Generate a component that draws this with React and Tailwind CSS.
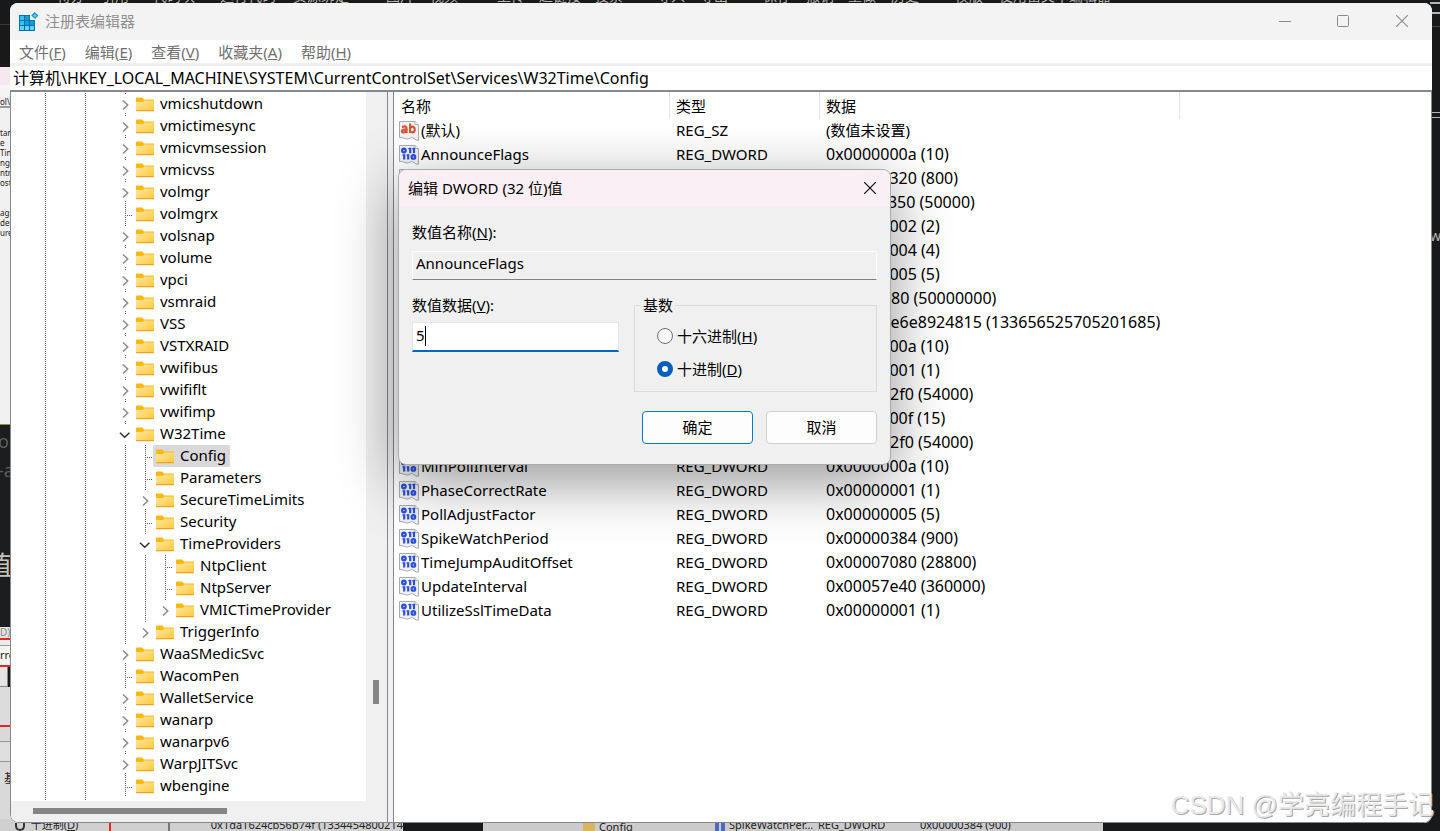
import React from "react";

const TREE = [
  { name: "vmicshutdown", kind: "closed" },
  { name: "vmictimesync", kind: "closed" },
  { name: "vmicvmsession", kind: "closed" },
  { name: "vmicvss", kind: "closed" },
  { name: "volmgr", kind: "closed" },
  { name: "volmgrx", kind: "leaf" },
  { name: "volsnap", kind: "closed" },
  { name: "volume", kind: "closed" },
  { name: "vpci", kind: "closed" },
  { name: "vsmraid", kind: "closed" },
  { name: "VSS", kind: "closed" },
  { name: "VSTXRAID", kind: "closed" },
  { name: "vwifibus", kind: "closed" },
  { name: "vwififlt", kind: "closed" },
  { name: "vwifimp", kind: "closed" },
  { name: "W32Time", kind: "open" },
  { name: "Config", kind: "leaf", depth: 1, selected: true },
  { name: "Parameters", kind: "leaf", depth: 1 },
  { name: "SecureTimeLimits", kind: "closed", depth: 1 },
  { name: "Security", kind: "leaf", depth: 1 },
  { name: "TimeProviders", kind: "open", depth: 1 },
  { name: "NtpClient", kind: "leaf", depth: 2 },
  { name: "NtpServer", kind: "leaf", depth: 2 },
  { name: "VMICTimeProvider", kind: "closed", depth: 2, last: true },
  { name: "TriggerInfo", kind: "closed", depth: 1, last: true },
  { name: "WaaSMedicSvc", kind: "closed" },
  { name: "WacomPen", kind: "leaf" },
  { name: "WalletService", kind: "closed" },
  { name: "wanarp", kind: "closed" },
  { name: "wanarpv6", kind: "closed" },
  { name: "WarpJITSvc", kind: "closed" },
  { name: "wbengine", kind: "leaf" },
];

const VALUES = [
  ["(默认)", "REG_SZ", "(数值未设置)"],
  ["AnnounceFlags", "REG_DWORD", "0x0000000a (10)"],
  ["ClockAdjustmentAuditLimit", "REG_DWORD", "0x00000320 (800)"],
  ["ClockHoldoverPeriod", "REG_DWORD", "0x0000c350 (50000)"],
  ["EventLogFlags", "REG_DWORD", "0x00000002 (2)"],
  ["FrequencyCorrectRate", "REG_DWORD", "0x00000004 (4)"],
  ["HoldPeriod", "REG_DWORD", "0x00000005 (5)"],
  ["LargePhaseOffset", "REG_DWORD", "0x02faf080 (50000000)"],
  ["LastKnownGoodTime", "REG_QWORD", "0x1dad7e6e8924815 (133656525705201685)"],
  ["LocalClockDispersion", "REG_DWORD", "0x0000000a (10)"],
  ["MaxAllowedPhaseOffset", "REG_DWORD", "0x00000001 (1)"],
  ["MaxNegPhaseCorrection", "REG_DWORD", "0x0000d2f0 (54000)"],
  ["MaxPollInterval", "REG_DWORD", "0x0000000f (15)"],
  ["MaxPosPhaseCorrection", "REG_DWORD", "0x0000d2f0 (54000)"],
  ["MinPollInterval", "REG_DWORD", "0x0000000a (10)"],
  ["PhaseCorrectRate", "REG_DWORD", "0x00000001 (1)"],
  ["PollAdjustFactor", "REG_DWORD", "0x00000005 (5)"],
  ["SpikeWatchPeriod", "REG_DWORD", "0x00000384 (900)"],
  ["TimeJumpAuditOffset", "REG_DWORD", "0x00007080 (28800)"],
  ["UpdateInterval", "REG_DWORD", "0x00057e40 (360000)"],
  ["UtilizeSslTimeData", "REG_DWORD", "0x00000001 (1)"],
];

const MENUS = [
  ["文件", "F"],
  ["编辑", "E"],
  ["查看", "V"],
  ["收藏夹", "A"],
  ["帮助", "H"],
];

// Labels of the editor toolbar behind the window, with the width of each slot.
const TOOLBAR = [
  ["待办", 44],
  ["引用", 52],
  ["代码块", 67],
  ["运行代码", 73],
  ["资源绑定", 93],
  ["图片", 44],
  ["视频", 67],
  ["上传", 42],
  ["超链接", 56],
  ["投票", 62],
  ["导入", 43],
  ["导出", 63],
  ["保存", 43],
  ["撤销", 42],
  ["重做", 43],
  ["历史", 64],
  ["模版", 44],
  ["使用富文本编辑器", 130],
];

function Dots({ d }) {
  return <path d={d} stroke="#606060" strokeDasharray="1 1" fill="none" shapeRendering="crispEdges" />;
}

function Guide({ line }) {
  return (
    <svg width="20" height="22" className="shrink-0" aria-hidden="true">
      {line && <Dots d="M10.5 0V22" />}
    </svg>
  );
}

function Branch({ kind, last }) {
  return (
    <svg width="18" height="22" className="shrink-0" aria-hidden="true">
      {kind === "leaf" && (
        <>
          <Dots d="M10.5 0V22" />
          <Dots d="M10 12.5H18" />
        </>
      )}
      {kind !== "leaf" && <Dots d="M10.5 0V2" />}
      {kind === "closed" && !last && <Dots d="M10.5 20V22" />}
      {kind === "closed" && <path d="M8 7.5L12.7 12L8 16.5" stroke="#8a8a8a" strokeWidth="1.5" fill="none" />}
      {kind === "open" && <path d="M5 9.8L9.7 14.3L14.4 9.8" stroke="#303030" strokeWidth="1.5" fill="none" />}
    </svg>
  );
}

function Folder() {
  return (
    <svg width="18" height="15" viewBox="0 0 18 15" className="shrink-0" aria-hidden="true">
      <defs>
        <linearGradient id="folder" x1="0" y1="0" x2="1" y2="1">
          <stop offset="0" stopColor="#ffe7a0" />
          <stop offset="1" stopColor="#ffc83a" />
        </linearGradient>
      </defs>
      <path d="M0 1.2Q0 .5 .7 .5H6.3L8 2.5H17.3Q18 2.5 18 3.2V6H0Z" fill="#fdb813" />
      <path d="M0 5H6.6L8.6 3.6H18V13.3Q18 14 17.3 14H.7Q0 14 0 13.3Z" fill="url(#folder)" />
      <path d="M0 13H18V13.3Q18 14.2 17.3 14.2H.7Q0 14.2 0 13.3Z" fill="#e8a520" />
    </svg>
  );
}

function ValueIcon({ text }) {
  return (
    <svg width="20" height="20" viewBox="0 0 20 20" className="shrink-0" aria-hidden="true">
      <path
        d="M.5 .5H16L19.5 3.6V19.3C17.4 19.5 15.6 18.4 13.8 16.9C12 15.6 10.8 18.2 8 18C5 17.8 3 15.6 .5 16.6Z"
        fill="#f0f2f4"
        stroke="#a9acaf"
      />
      <path d="M16 .5V3.6H19.5" fill="#fff" stroke="#a9acaf" />
      {text ? (
        <g fill="none" stroke="#d9502e" strokeWidth="2.1">
          <path d="M3 6Q7.6 4.2 7.6 7.5V11.9M7.6 8.4Q2.9 8.1 2.9 10.1Q3.1 11.8 5.3 11.4Q7 10.9 7.6 9.5" />
          <path d="M11.1 2.4V11.9M11.1 7.5Q11.8 5.3 14 5.7Q15.8 6.3 15.8 8.5Q15.8 10.9 13.8 11.4Q11.8 11.5 11.1 9.9" />
        </g>
      ) : (
        <g fill="none" stroke="#2c4fdb" strokeWidth="2.2">
          <circle cx="4.9" cy="5.5" r="1.8" />
          <path d="M11.2 2.8V8.2M15 2.8V8.2" />
          <path d="M9.3 3.6H11M13.2 3.6H15" strokeWidth="1.2" />
          <path d="M5.2 9.2V14.6M9.2 9.2V14.6" />
          <path d="M3.3 10H5M7.3 10H9" strokeWidth="1.2" />
          <circle cx="14.4" cy="11.9" r="1.8" />
        </g>
      )}
    </svg>
  );
}

function AppIcon() {
  return (
    <svg width="20" height="20" viewBox="0 0 20 20" aria-hidden="true">
      <path d="M0 3H11V8H16V19H0Z" fill="#0b6fa8" />
      <g fill="#35c1f1">
        <path d="M1 4H5V8H1Z M1 9H5V13H1Z" />
        <path d="M1 14H5V18H1Z M6 14H10V18H6Z M11 14H15V18H11Z" fill="#5fd3fa" />
      </g>
      <path d="M6 4H10V8H6Z M6 9H10V13H6Z M11 9H15V13H11Z" fill="#0e9fdc" />
      <path d="M15.6 0L19.4 3.4L16 7L12.2 3.6Z" fill="#1792c8" />
      <path d="M15.7 1.8L17.8 3.5L15.9 5.4L13.9 3.6Z" fill="#5cc8ee" />
    </svg>
  );
}

function Backdrop() {
  return (
    <div className="absolute inset-0 overflow-hidden bg-[#18191a] select-none" aria-hidden="true">
      <div className="absolute top-0 left-0 h-1 w-full overflow-hidden pl-[57px] text-[14px] leading-5 text-[#b8b4ac]">
        <div className="-mt-3.5 flex whitespace-nowrap">
          {TOOLBAR.map(([label, width]) => (
            <span key={label} className="shrink-0" style={{ width }}>{label}</span>
          ))}
        </div>
      </div>
      <div className="absolute top-0 left-0 flex h-full w-10 flex-col overflow-hidden text-[8px] leading-[10px] text-[#202020]">
        <div className="h-[25px] border-b border-[#3a3a3a]" />
        <div className="h-[42px]" />
        <div className="h-[18px] bg-[#f6e8ee]" />
        <div className="h-[12px] bg-[#f4f4f4]" />
        <div className="h-[11px] border-b-2 border-[#9a9a9a] bg-[#ececec] whitespace-nowrap">ol\W</div>
        <div className="flex h-[316px] flex-col bg-[#f1f1f1] pt-5">
          <span>tanc</span><span>e</span><span>Time</span><span>ngF</span><span>ntri</span><span>ost</span>
          <span className="pt-5">ags</span><span>der</span><span>ure</span>
        </div>
        <div className="h-[203px] border-t border-[#a08a3a] bg-[#1b1d1e] pt-0.5 text-[18px] leading-[29px] text-[#5c5c5c]">
          <div className="-ml-0.5">os</div>
          <div className="-ml-0.5">-a</div>
          <div className="mt-[66px] -ml-3.5 text-[26px] leading-[28px] text-[#c9c4ba]">值</div>
        </div>
        <div className="h-[13px] border-b-2 border-[#e0281e] bg-[#e4e4e4] text-[10px] text-[#888]">D)</div>
        <div className="h-[6px] border-b border-[#999] bg-[#ececec]" />
        <div className="h-[21px] border-b-2 border-[#e0281e] bg-[#f4f4f4] pt-1 text-[11px]">rre</div>
        <div className="h-[20px] w-2 border-r border-b border-[#888] bg-[#e4e4e4]" />
        <div className="h-[40px] border-b-2 border-[#e0281e] bg-[#dcdcdc]" />
        <div className="h-[15px] border-b border-[#999] bg-[#d9d9d9]" />
        <div className="h-[20px] border-b border-[#999] bg-[#dedede]" />
        <div className="flex-1 bg-[#d9d9d9] pt-3 pl-1 text-[12px]">基</div>
      </div>
      <div className="absolute bottom-0 left-0 flex h-3 w-full items-end overflow-hidden text-[11px] leading-[11px] text-[#222]">
        <div className="flex h-3 w-[403px] bg-[#d0d0d0]">
          <span className="mt-1 ml-[15px] h-2 w-2.5 rounded-b-full border-2 border-t-0 border-[#333]" />
          <span className="ml-1.5 w-[83px] whitespace-nowrap">十进制(<u>D</u>)</span>
          <span className="h-3 w-[3px] bg-[#e0281e]" />
          <span className="ml-[57px] w-[45px] border-l-2 border-[#777]" />
          <span className="whitespace-nowrap">0x1da1624cb56b74f (1334454800214</span>
        </div>
        <div className="w-20" />
        <div className="flex h-3 flex-1 items-start gap-1 bg-[#cbcbcb] whitespace-nowrap">
          <span className="ml-[100px] h-3 w-3 bg-[#d8b660]" />
          <span className="w-[112px] pt-0.5">Config</span>
          <span className="h-3 w-2.5 border-x-4 border-[#5068c0]" />
          <span className="w-[85px]">SpikeWatchPer…</span>
          <span className="w-[98px]">REG_DWORD</span>
          <span>0x00000384 (900)</span>
        </div>
        <div className="w-[337px]" />
      </div>
      <div className="absolute top-0 right-0 flex h-full w-2.5 flex-col overflow-hidden text-[14px] leading-5 text-[#b5b5b5]">
        <div className="mt-0.5 h-3 border-y-2 border-[#b5b5b5]" />
        <div className="mt-3 border-t border-[#444]" />
        <div className="mt-[85px] h-1.5 border-y border-[#b5b5b5]" />
        <div className="mt-[108px]">we</div>
      </div>
    </div>
  );
}

function TitleBar() {
  return (
    <header className="flex h-[37px] shrink-0 items-center bg-[#f3f3f3] pl-[9px]">
      <AppIcon />
      <h1 className="ml-1.5 flex-1 pb-0.5 text-[#8f8f8f]">注册表编辑器</h1>
      <button aria-label="最小化" className="flex h-full w-[58px] items-center justify-center">
        <svg width="12" height="12" aria-hidden="true"><path d="M0 5.5H12" stroke="#8a8a8a" /></svg>
      </button>
      <button aria-label="最大化" className="flex h-full w-[58px] items-center justify-center pb-0.5">
        <svg width="12" height="12" aria-hidden="true"><rect x=".5" y=".5" width="11" height="11" rx="1" fill="none" stroke="#8a8a8a" /></svg>
      </button>
      <button aria-label="关闭" className="flex h-full w-[60px] items-center justify-center pb-0.5">
        <svg width="12" height="12" aria-hidden="true"><path d="M0 0L12 12M12 0L0 12" stroke="#8a8a8a" strokeWidth="1.1" /></svg>
      </button>
    </header>
  );
}

function TreePane() {
  return (
    <aside className="flex w-[377px] shrink-0 flex-col border-r border-[#828790] bg-[#f0f0f0]">
      <div className="flex min-h-0 flex-1">
        <ul className="flex-1 overflow-hidden bg-white pt-px pl-6">
          {TREE.map(({ name, kind, depth = 0, selected, last }) => (
            <li key={name} className="flex h-[22px] items-center">
              <Guide line />
              <Guide />
              <Guide line />
              <Guide />
              {depth > 0 && <Guide line />}
              {depth > 1 && <Guide line />}
              <Branch kind={kind} last={last} />
              <span
                className={
                  selected
                    ? "flex h-[22px] items-center gap-1.5 rounded-xs bg-[#d9d9d9] pr-1 pl-[3px]"
                    : "flex h-[22px] items-center gap-1.5 pr-1 pl-[3px]"
                }
              >
                <Folder />
                <span className="pb-0.5">{name}</span>
              </span>
            </li>
          ))}
          <li className="flex h-[22px]">
            <Guide line />
            <Guide />
            <Guide line />
          </li>
        </ul>
        <div className="flex w-[21px] shrink-0 flex-col items-center pr-0.5">
          <div className="flex-[588]" />
          <div className="h-6 w-1.5 bg-[#858585]" />
          <div className="flex-[97]" />
        </div>
      </div>
      <div className="flex h-[21px] shrink-0 items-center pb-0.5 pl-[22px]">
        <div className="h-1.5 w-[194px] bg-[#858585]" />
      </div>
    </aside>
  );
}

function ValueList() {
  return (
    <div className="min-w-0 flex-1 overflow-hidden border-l border-[#828790] bg-white">
      <table className="w-full table-fixed border-separate border-spacing-0 text-left whitespace-nowrap">
        <colgroup>
          <col className="w-[276px]" />
          <col className="w-[150px]" />
          <col className="w-[360px]" />
          <col />
        </colgroup>
        <thead>
          <tr className="h-[27px]">
            <th className="border-r border-[#e5e5e5] p-0 pl-[7px] font-normal">名称</th>
            <th className="border-r border-[#e5e5e5] p-0 pl-1.5 font-normal">类型</th>
            <th className="border-r border-[#e5e5e5] p-0 pl-1.5 font-normal">数据</th>
            <th className="p-0" />
          </tr>
        </thead>
        <tbody>
          {VALUES.map(([name, type, data]) => (
            <tr key={name} className="h-6">
              <td className="p-0 pl-[5px]">
                <span className="flex items-center gap-0.5">
                  <ValueIcon text={type === "REG_SZ"} />
                  <span className="pb-0.5">{name}</span>
                </span>
              </td>
              <td className="p-0 pb-0.5 pl-1.5">{type}</td>
              <td className={type === "REG_SZ" ? "p-0 pb-0.5 pl-1.5" : "p-0 pb-0.5 pl-1.5 text-[16px] leading-5"}>{data}</td>
              <td className="p-0" />
            </tr>
          ))}
        </tbody>
      </table>
    </div>
  );
}

function EditDialog() {
  const radio =
    "h-4 w-4 appearance-none rounded-full border border-[#707070] bg-[#f8f8f8] checked:border-[5px] checked:border-[#005fb8] checked:bg-white";
  return (
    <div
      role="dialog"
      aria-labelledby="dialog-title"
      className="absolute top-[166px] left-[388px] w-[493px] overflow-hidden rounded-lg border border-[#aaaaaa] bg-[#f0f0f0] shadow-[0_16px_60px_rgba(0,0,0,0.42)]"
    >
      <div className="flex h-[37px] items-center justify-between bg-[#f9eff4] pb-0.5 pl-[9px]">
        <h2 id="dialog-title">编辑 DWORD (32 位)值</h2>
        <button aria-label="关闭" className="flex h-full w-10 items-center justify-center">
          <svg width="12" height="12" aria-hidden="true"><path d="M0 0L12 12M12 0L0 12" stroke="#111" strokeWidth="1.2" /></svg>
        </button>
      </div>
      <form className="px-[13px] pt-[15px] pb-5" onSubmit={(e) => e.preventDefault()}>
        <label htmlFor="value-name" className="block">数值名称(<u>N</u>):</label>
        <input
          id="value-name"
          readOnly
          defaultValue="AnnounceFlags"
          className="mt-[9px] block h-[29px] w-full border border-[#fbfbfb] border-b-[#808080] bg-[#f0f0f0] px-[3px] pb-1.5"
        />
        <div className="mt-[15px] flex gap-[15px]">
          <div className="w-[207px]">
            <label htmlFor="value-data" className="block">数值数据(<u>V</u>):</label>
            <div className="relative mt-[7px]">
              <input
                id="value-data"
                defaultValue="5"
                className="block h-[30px] w-full border border-b-2 border-[#e5e5e5] border-b-[#0067c0] bg-white px-[3px] pb-1 outline-none"
              />
              <span className="absolute top-1 left-[13px] h-5 w-px bg-black" />
            </div>
          </div>
          <fieldset className="flex-1 border border-[#dcdcdc] pb-[11px] pl-[22px]">
            <legend className="-ml-4 px-0.5">基数</legend>
            <div className="flex flex-col gap-[13px] pt-[11px] pb-px">
              <label className="flex items-center gap-1">
                <input type="radio" name="base" className={radio} />
                <span>十六进制(<u>H</u>)</span>
              </label>
              <label className="flex items-center gap-1">
                <input type="radio" name="base" defaultChecked className={radio} />
                <span>十进制(<u>D</u>)</span>
              </label>
            </div>
          </fieldset>
        </div>
        <div className="mt-[19px] flex justify-end gap-[13px]">
          <button type="submit" className="h-[33px] w-[111px] rounded border border-[#0078d4] bg-[#fdfdfd] pb-0.5">确定</button>
          <button type="button" className="h-[33px] w-[111px] rounded border border-[#d0d0d0] bg-[#fdfdfd] pb-0.5">取消</button>
        </div>
      </form>
    </div>
  );
}

export default function App() {
  return (
    <div className="relative flex h-screen overflow-hidden pt-[3px] pr-2 pb-2 pl-2.5 font-['Noto_Sans','Noto_Sans_CJK_SC',sans-serif] text-[15px] leading-5 text-black">
      <Backdrop />
      <main className="relative flex min-w-0 flex-1 flex-col overflow-hidden rounded-lg bg-white">
        <TitleBar />
        <nav className="flex h-[23px] shrink-0 items-center gap-[19px] pl-[9px] text-[#6f6f6f]">
          {MENUS.map(([label, key]) => (
            <button key={key}>{label}(<u>{key}</u>)</button>
          ))}
        </nav>
        <div className="shrink-0 border-t-[3px] border-b-2 border-t-[#f0f0f0] border-b-[#828790]">
          <input
            aria-label="地址"
            readOnly
            defaultValue="计算机\HKEY_LOCAL_MACHINE\SYSTEM\CurrentControlSet\Services\W32Time\Config"
            className="block h-6 w-full pb-0.5 pl-[3px] text-[16px] leading-5 outline-none"
          />
        </div>
        <div className="flex min-h-0 flex-1 gap-[5px] overflow-hidden rounded-b-lg border border-t-0 border-[#828790] bg-[#f0f0f0]">
          <TreePane />
          <ValueList />
        </div>
        <EditDialog />
      </main>
      <div className="pointer-events-none absolute right-1.5 bottom-2 font-['Liberation_Sans','Noto_Sans_CJK_SC',sans-serif] text-[26px] leading-9 whitespace-nowrap text-[#e8e8e8] [text-shadow:1px_1px_0_#a8a8a8]">
        CSDN @学亮编程手记
      </div>
    </div>
  );
}
